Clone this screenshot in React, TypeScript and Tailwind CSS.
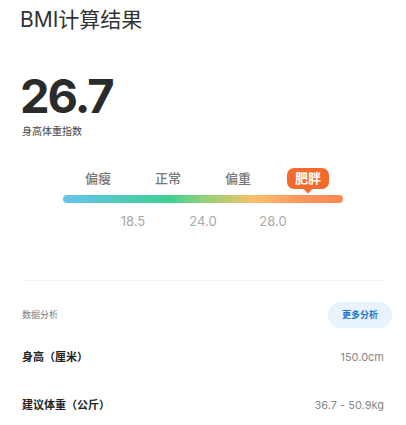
const font = { fontFamily: "Inter, 'Noto Sans CJK SC', sans-serif" };

const levels = ["偏瘦", "正常", "偏重", "肥胖"];
const marks = ["18.5", "24.0", "28.0"];

export default function App() {
  return (
    <div className="h-[425px] w-[406px] bg-white text-[#222]" style={font}>
      <h1 className="px-5 pt-[6px] text-[21px] leading-[28px] font-normal text-[#333]">
        BMI计算结果
      </h1>

      <div className="mt-[38px] px-5">
        <div className="text-[47px] font-bold leading-[48px] tracking-[-2px] text-[#2b2b2b]">26.7</div>
        <div className="mt-[4px] pl-[2px] text-[10px] leading-[14px] text-[#444]">身高体重指数</div>
      </div>

      {/* bmi scale */}
      <div className="ml-[63px] mt-[28px] w-[280px]">
        <div className="grid h-[24px] grid-cols-4 items-center">
          {levels.map((l, i) =>
            i === 3 ? (
              <div key={l} className="flex justify-center">
                <span className="relative rounded-[7px] bg-[#f26b2c] px-[8px] text-[13px] font-bold leading-[21px] text-white">
                  {l}
                  <span className="absolute -bottom-[3px] left-1/2 h-[7px] w-[7px] -translate-x-1/2 rotate-45 bg-[#f26b2c]" />
                </span>
              </div>
            ) : (
              <div key={l} className="text-center text-[13px] font-medium leading-[18px] text-[#777]">
                {l}
              </div>
            ),
          )}
        </div>
        <div className="mt-[5px] h-[8px] rounded-full bg-[linear-gradient(90deg,#67c3ee_0%,#3fcf92_38%,#8fd17a_50%,#f7c16a_68%,#fd9560_85%,#ff8a4f_100%)]" />
        <div className="mt-[9px] flex pl-[35px]">
          {marks.map((m) => (
            <div key={m} className="w-[70px] text-center text-[13px] leading-[18px] text-[#aaa]">
              {m}
            </div>
          ))}
        </div>
      </div>

      <div className="mx-[22px] mt-[50px] h-px bg-[#f2f2f2]" />

      <div className="mt-[21px] flex items-center justify-between pl-[22px] pr-[14px]">
        <span className="text-[9px] text-[#777c88]">数据分析</span>
        <button className="h-[26px] w-[64px] rounded-full bg-[#e9f3fd] text-[9px] font-bold text-[#1d74cf]">
          更多分析
        </button>
      </div>

      <div className="mt-[19px] flex items-center justify-between px-[22px] leading-[20px]">
        <span className="text-[11px] font-bold text-[#222]">身高（厘米）</span>
        <span className="text-[11px] text-[#888]">150.0cm</span>
      </div>
      <div className="mt-[28px] flex items-center justify-between px-[22px] leading-[20px]">
        <span className="text-[11px] font-bold text-[#222]">建议体重（公斤）</span>
        <span className="text-[11px] text-[#888]">36.7 - 50.9kg</span>
      </div>
    </div>
  );
}
